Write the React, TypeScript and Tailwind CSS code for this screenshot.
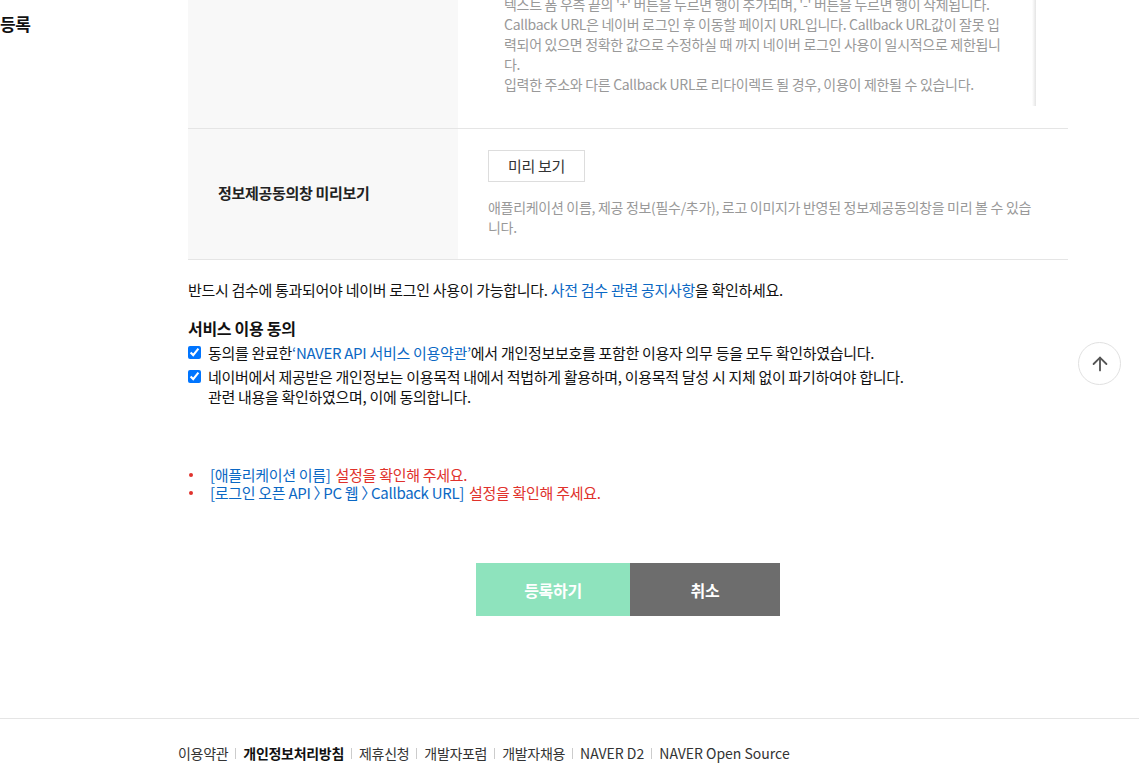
import { ArrowUp } from 'lucide-react';

export default function App() {
    return (
        <div className="relative min-h-[764px] overflow-hidden bg-white font-['Noto_Sans_CJK_KR',sans-serif] tracking-[-0.3px] text-[#222]">
            <div className="flex">
                {/* Sidebar (cut off on the left) */}
                <aside className="w-[188px] shrink-0 pt-[13px]">
                    <h2 className="text-[17px] font-bold leading-[22px] tracking-[-0.5px] text-[#111]">
                        등록
                    </h2>
                </aside>

                <main className="w-[880px] shrink-0">
                    {/* Callback URL row (scrolled, top part out of view) */}
                    <div className="-mt-[16px] flex border-b border-[#e5e5e5]">
                        <div className="w-[270px] shrink-0 bg-[#f8f8f8]" />
                        <div className="flex-1 pb-[22px] pl-[30px]">
                            <div className="flex w-[548px]">
                                <div className="flex-1 whitespace-nowrap px-4 pb-[12px] pt-[10px] text-[14px] leading-[20px] text-[#999]">
                                    <p>텍스트 폼 우측 끝의 '+' 버튼을 누르면 행이 추가되며, '-' 버튼을 누르면 행이 삭제됩니다.</p>
                                    <p>Callback URL은 네이버 로그인 후 이동할 페이지 URL입니다. Callback URL값이 잘못 입</p>
                                    <p>력되어 있으면 정확한 값으로 수정하실 때 까지 네이버 로그인 사용이 일시적으로 제한됩니</p>
                                    <p>다.</p>
                                    <p>입력한 주소와 다른 Callback URL로 리다이렉트 될 경우, 이용이 제한될 수 있습니다.</p>
                                </div>
                                <div className="w-[4px] bg-gradient-to-r from-white to-[#e4e4e4]" />
                            </div>
                        </div>
                    </div>

                    {/* Preview row */}
                    <div className="flex border-b border-[#e5e5e5]">
                        <div className="flex w-[270px] shrink-0 items-center bg-[#f8f8f8] pb-[2px] pl-[30px] text-[15px] font-bold text-[#222]">
                            정보제공동의창 미리보기
                        </div>
                        <div className="flex-1 pb-[22px] pl-[30px] pr-[20px] pt-[21px]">
                            <button className="h-[32px] w-[97px] border border-[#ddd] bg-white text-[15px] text-[#333]">
                                미리 보기
                            </button>
                            <p className="mt-[15px] whitespace-nowrap text-[14px] leading-[20px] text-[#999]">
                                애플리케이션 이름, 제공 정보(필수/추가), 로고 이미지가 반영된 정보제공동의창을 미리 볼 수 있습
                                <br />
                                니다.
                            </p>
                        </div>
                    </div>

                    {/* Notice */}
                    <p className="mt-[19px] text-[15px] leading-[22px] text-[#111]">
                        반드시 검수에 통과되어야 네이버 로그인 사용이 가능합니다.{' '}
                        <a href="#" className="text-[#0b68c4]">
                            사전 검수 관련 공지사항
                        </a>
                        을 확인하세요.
                    </p>

                    {/* Agreement */}
                    <h3 className="mt-[16px] text-[16px] font-bold leading-[22px] text-[#111]">
                        서비스 이용 동의
                    </h3>
                    <label className="mt-[4px] flex items-start text-[15px] leading-[20px] text-[#111]">
                        <input type="checkbox" defaultChecked className="mr-[7px] mt-[3px] size-[13px] shrink-0" />
                        <span>
                            동의를 완료한
                            <a href="#" className="text-[#0b68c4]">‘NAVER API 서비스 이용약관’</a>
                            에서 개인정보보호를 포함한 이용자 의무 등을 모두 확인하였습니다.
                        </span>
                    </label>
                    <label className="mt-[4px] flex items-start text-[15px] leading-[20px] text-[#111]">
                        <input type="checkbox" defaultChecked className="mr-[7px] mt-[3px] size-[13px] shrink-0" />
                        <span>
                            네이버에서 제공받은 개인정보는 이용목적 내에서 적법하게 활용하며, 이용목적 달성 시 지체 없이 파기하여야 합니다.
                            <br />
                            관련 내용을 확인하였으며, 이에 동의합니다.
                        </span>
                    </label>

                    {/* Validation errors */}
                    <ul className="mt-[59px] text-[15px]">
                        <li className="flex h-[18px] items-center leading-[18px]">
                            <span className="ml-[1px] mr-[17px] size-[4px] rounded-full bg-[#e0322c]" />
                            <span className="text-[#0b68c4]">[애플리케이션 이름]</span>
                            <span className="ml-[5px] text-[#e0322c]">설정을 확인해 주세요.</span>
                        </li>
                        <li className="flex h-[18px] items-center leading-[18px]">
                            <span className="ml-[1px] mr-[17px] size-[4px] rounded-full bg-[#e0322c]" />
                            <span className="text-[#0b68c4]">
                                [로그인 오픈 API <span className="-mr-[5px]">〉</span>PC 웹 <span className="-mr-[5px]">〉</span>Callback URL]
                            </span>
                            <span className="ml-[5px] text-[#e0322c]">설정을 확인해 주세요.</span>
                        </li>
                    </ul>

                    {/* Actions */}
                    <div className="mt-[61px] flex justify-center">
                        <button className="h-[53px] w-[154px] bg-[#8ee3bd] text-[16px] font-bold text-white">
                            등록하기
                        </button>
                        <button className="h-[53px] w-[150px] bg-[#6d6d6d] text-[16px] font-bold text-white">
                            취소
                        </button>
                    </div>
                </main>
            </div>

            {/* Footer */}
            <footer className="mt-[102px] border-t border-[#e5e5e5] pl-[178px] pt-[24px]">
                <ul className="flex items-center text-[14px] leading-[20px] text-[#333]">
                    <li>이용약관</li>
                    <li className="mx-[7px] h-[11px] w-px bg-[#ccc]" />
                    <li className="font-bold text-[#111]">개인정보처리방침</li>
                    <li className="mx-[7px] h-[11px] w-px bg-[#ccc]" />
                    <li>제휴신청</li>
                    <li className="mx-[7px] h-[11px] w-px bg-[#ccc]" />
                    <li>개발자포럼</li>
                    <li className="mx-[7px] h-[11px] w-px bg-[#ccc]" />
                    <li>개발자채용</li>
                    <li className="mx-[7px] h-[11px] w-px bg-[#ccc]" />
                    <li className="tracking-normal">NAVER D2</li>
                    <li className="mx-[7px] h-[11px] w-px bg-[#ccc]" />
                    <li className="tracking-normal">NAVER Open Source</li>
                </ul>
            </footer>

            {/* Scroll to top */}
            <button className="absolute right-[18px] top-[342px] flex size-[43px] items-center justify-center rounded-full border border-[#e1e1e1] bg-white text-[#555]">
                <ArrowUp size={22} strokeWidth={2} />
            </button>
        </div>
    );
}
